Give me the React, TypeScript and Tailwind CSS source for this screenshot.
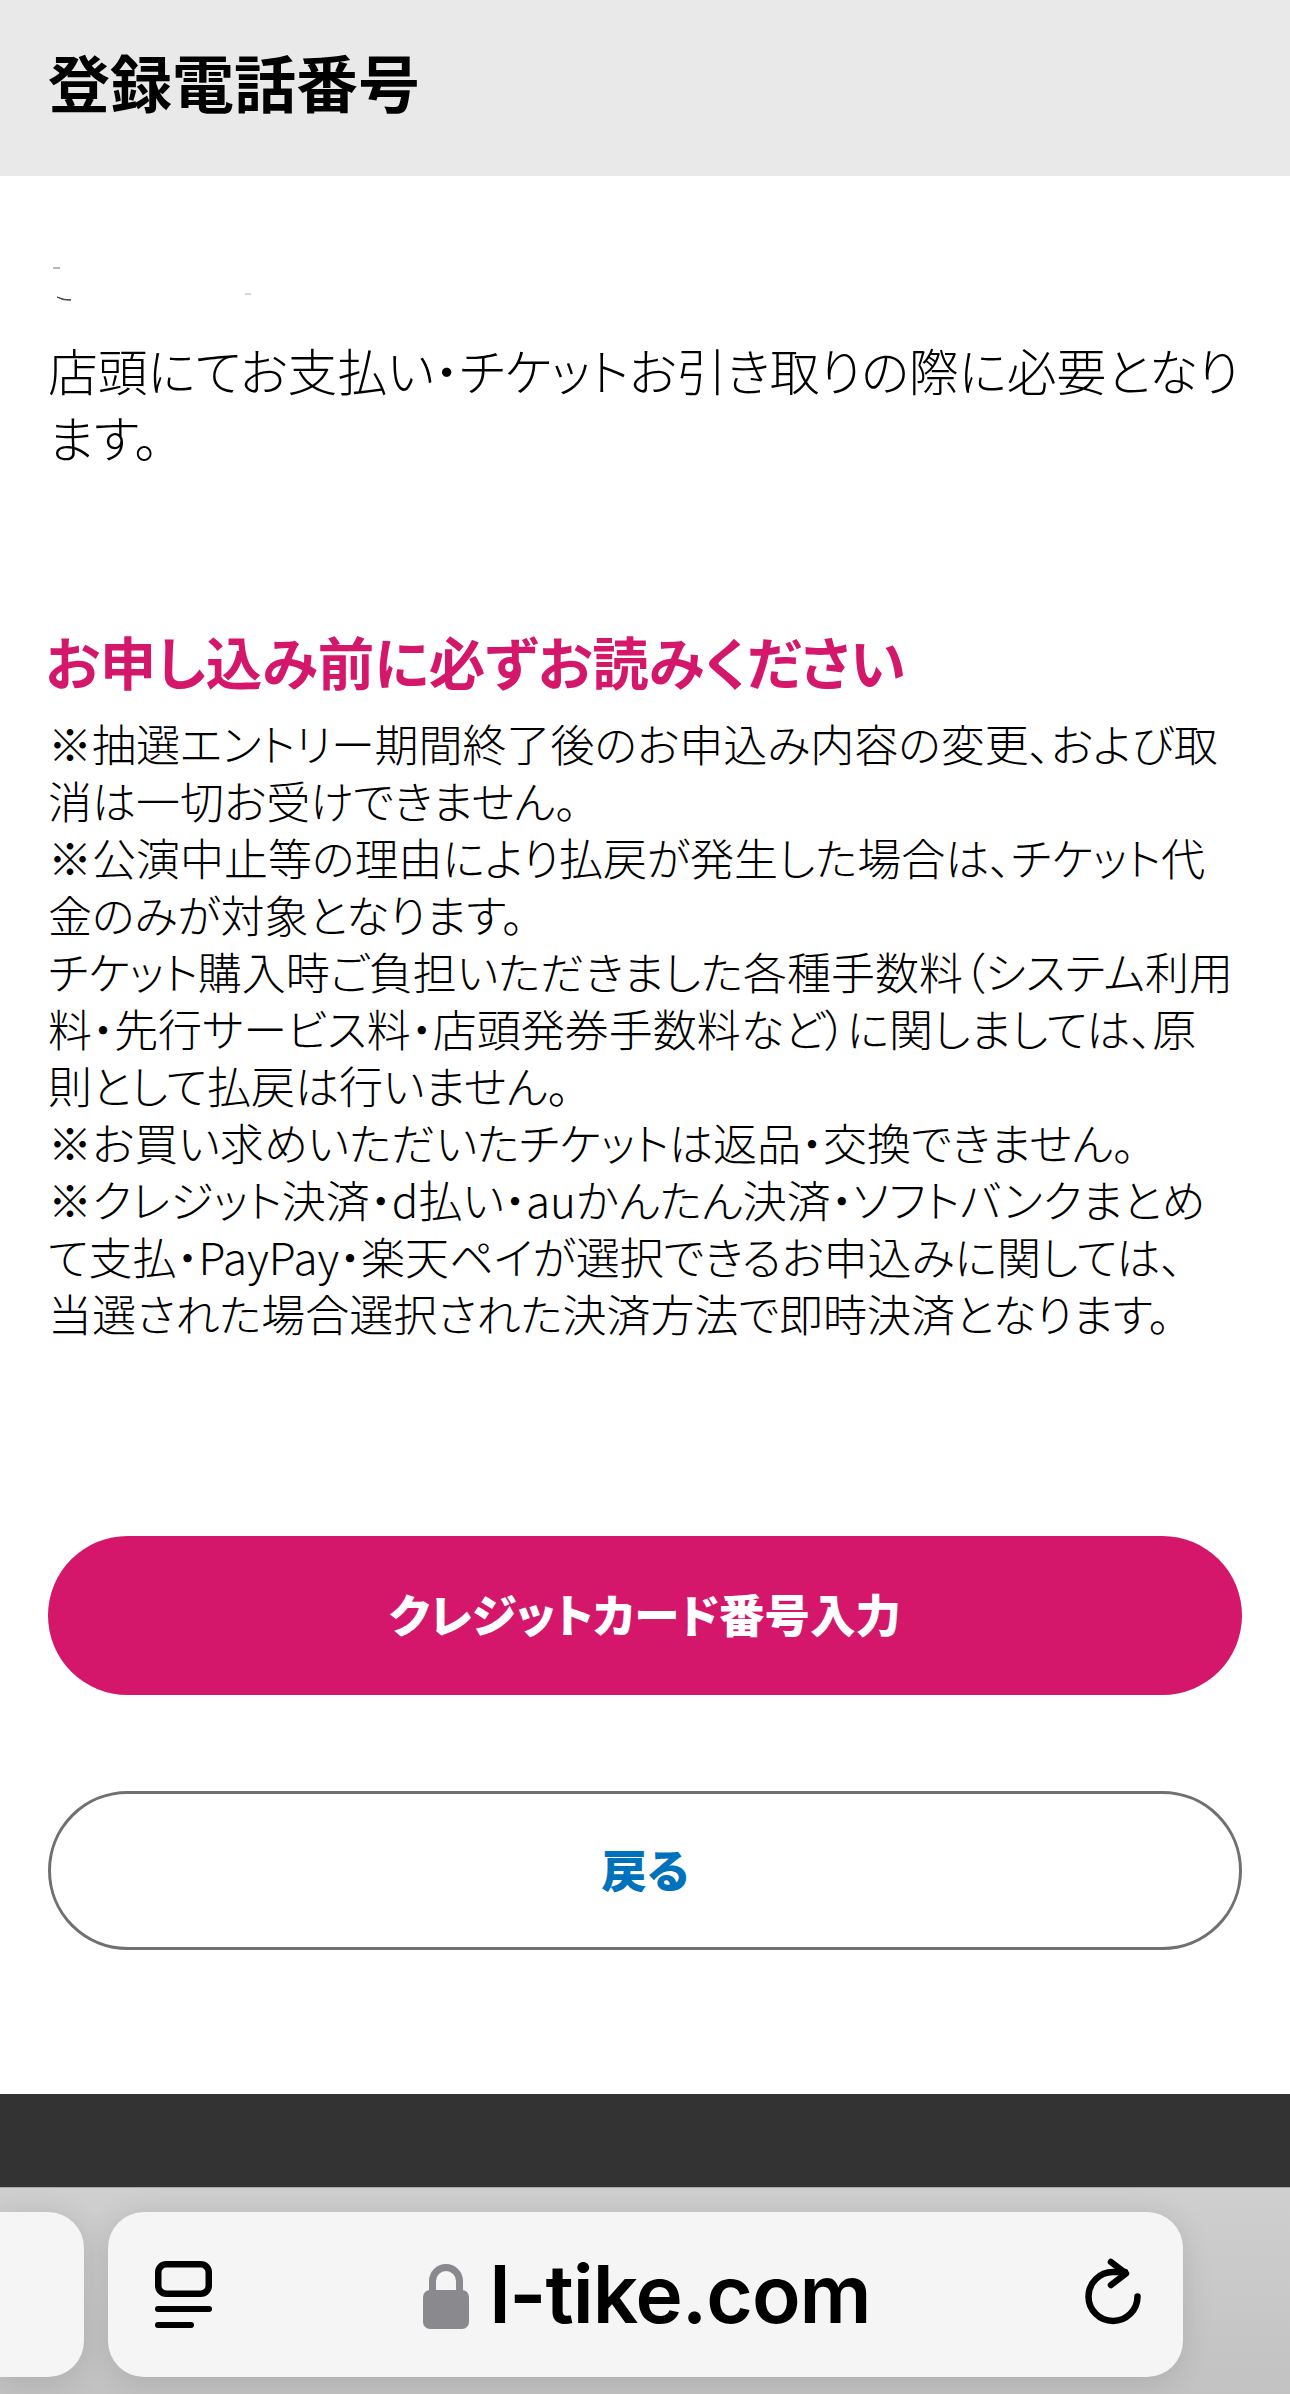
const font = "font-['Noto_Sans_CJK_JP','Noto_Sans',sans-serif]";

const lead = ["店頭にてお支払い・チケットお引き取りの際に必要となり", "ます。"];

const notes = [
  "※抽選エントリー期間終了後のお申込み内容の変更、および取",
  "消は一切お受けできません。",
  "※公演中止等の理由により払戻が発生した場合は、チケット代",
  "金のみが対象となります。",
  "チケット購入時ご負担いただきました各種手数料（システム利用",
  "料・先行サービス料・店頭発券手数料など）に関しましては、原",
  "則として払戻は行いません。",
  "※お買い求めいただいたチケットは返品・交換できません。",
  "※クレジット決済・d払い・auかんたん決済・ソフトバンクまとめ",
  "て支払・PayPay・楽天ペイが選択できるお申込みに関しては、",
  "当選された場合選択された決済方法で即時決済となります。",
];

function TabsIcon() {
  return (
    <svg width="57" height="67" viewBox="0 0 57 67" fill="none" stroke="black" strokeWidth="6.5" strokeLinecap="round">
      <rect x="3.25" y="3.25" width="50.5" height="29.5" rx="8" />
      <path d="M3 48h51M3 64h33" strokeWidth="6" />
    </svg>
  );
}

function LockIcon() {
  return (
    <svg width="46" height="65" viewBox="0 0 46 65">
      <path d="M9.5 28V17a13.5 13.5 0 0 1 27 0v11" fill="none" stroke="#8a8a8e" strokeWidth="7" />
      <rect x="0" y="26" width="46" height="39" rx="7" fill="#8a8a8e" />
    </svg>
  );
}

function ReloadIcon() {
  return (
    <svg width="56" height="75" viewBox="0 0 56 75" fill="none" stroke="black" strokeWidth="6.5" strokeLinecap="round" strokeLinejoin="round">
      <path d="M52.5 39.5a24.5 24.5 0 1 1-24.5-24.5h12" />
      <path d="M26 5l15 11.5-15 11.5" />
    </svg>
  );
}

export default function App() {
  return (
    <div className={`${font} flex h-[2394px] flex-col overflow-hidden bg-white text-black [font-feature-settings:'palt']`}>
      <header className="flex h-[176px] shrink-0 items-center bg-[#e9e9e9] px-12 pb-[14px]">
        <h1 className="text-[62px] leading-none font-bold">登録電話番号</h1>
      </header>

      <main className="flex-1 px-12">
        <div className="relative h-[160px]">
          <svg className="absolute top-[90px] left-0" width="220" height="40" viewBox="0 0 220 40" fill="none">
            <path d="M5 2h7" stroke="#a0a0a0" strokeWidth="1.5" />
            <path d="M9 31q7 3 14 3q-8 1-14-3z" fill="#444444" stroke="#444444" strokeWidth="1" />
            <path d="M197 28h6" stroke="#c8c8c8" strokeWidth="1.5" />
          </svg>
        </div>
        <div className="text-[49.8px] leading-[67px] font-light whitespace-nowrap">
          {lead.map((line) => (
            <p key={line}>{line}</p>
          ))}
        </div>

        <h2 className="mt-[155px] -ml-[3px] text-[56.5px] leading-[70px] font-bold text-[#d4176b]">お申し込み前に必ずお読みください</h2>
        <div className="mt-[20px] text-[44px] leading-[57px] font-light whitespace-nowrap">
          {notes.map((line) => (
            <p key={line}>{line}</p>
          ))}
        </div>

        <div className="mt-[194px] flex flex-col gap-[96px] text-[45.5px] font-black">
          <button className="h-[159px] rounded-full bg-[#d4176b] pb-[4px] text-white">クレジットカード番号入力</button>
          <button className="h-[159px] rounded-full border-[3px] border-[#707070] bg-white pb-[4px] text-[#0071bc]">戻る</button>
        </div>
      </main>

      <div className="h-[93px] shrink-0 bg-[#333333]" />

      <div className="flex h-[207px] shrink-0 gap-6 overflow-hidden border-t border-[#a8a8a8] bg-gradient-to-b from-[#cfcfcf] to-[#c2c2c2] pt-6 pr-[107px]">
        <div className="h-[165px] w-[84px] shrink-0 rounded-r-[36px] bg-[#f5f5f5] shadow-[0_4px_30px_rgba(0,0,0,0.12)]" />
        <div className="flex h-[165px] flex-1 items-center justify-between rounded-[36px] bg-[#f5f5f5] pr-[42px] pl-[47px] shadow-[0_4px_30px_rgba(0,0,0,0.12)]">
          <TabsIcon />
          <div className="mr-[3px] flex items-end gap-[20px]">
            <LockIcon />
            <span className="mb-[2px] font-['Inter',sans-serif] text-[80px] leading-[66px] font-semibold tracking-[-1px]">l-tike.com</span>
          </div>
          <ReloadIcon />
        </div>
      </div>
    </div>
  );
}
